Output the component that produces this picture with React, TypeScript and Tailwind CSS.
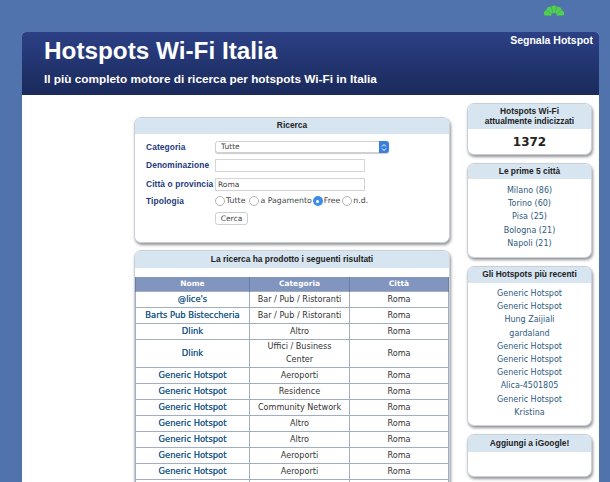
const results: [string, string, string, boolean?][] = [
  ["@lice's", "Bar / Pub / Ristoranti", "Roma"],
  ["Barts Pub Bisteccheria", "Bar / Pub / Ristoranti", "Roma"],
  ["Dlink", "Altro", "Roma"],
  ["Dlink", "Uffici / Business Center", "Roma", true],
  ["Generic Hotspot", "Aeroporti", "Roma"],
  ["Generic Hotspot", "Residence", "Roma"],
  ["Generic Hotspot", "Community Network", "Roma"],
  ["Generic Hotspot", "Altro", "Roma"],
  ["Generic Hotspot", "Altro", "Roma"],
  ["Generic Hotspot", "Aeroporti", "Roma"],
  ["Generic Hotspot", "Aeroporti", "Roma"],
  ["", "", ""],
];

const cities = ["Milano (86)", "Torino (60)", "Pisa (25)", "Bologna (21)", "Napoli (21)"];
const recent = [
  "Generic Hotspot",
  "Generic Hotspot",
  "Hung Zaijiali",
  "gardaland",
  "Generic Hotspot",
  "Generic Hotspot",
  "Generic Hotspot",
  "Alica-4501805",
  "Generic Hotspot",
  "Kristina",
];
const tipologie = [
  { label: "Tutte", checked: false, gap: "mr-[4px]" },
  { label: "a Pagamento", checked: false, gap: "mr-[1px]" },
  { label: "Free", checked: true, gap: "mr-[2px]" },
  { label: "n.d.", checked: false, gap: "" },
];

function Panel({ title, head, children }: { title: React.ReactNode; head: string; children: React.ReactNode }) {
  return (
    <div className="overflow-hidden rounded-[7px] border border-[#c9d0d8] bg-white shadow-[1px_2px_3px_rgba(60,60,70,0.55)]">
      <div className={`flex items-center justify-center bg-[#d7e5f1] text-center font-['Liberation_Sans',sans-serif] text-[8.4px] leading-[9.5px] font-bold text-[#222] ${head}`}>
        {title}
      </div>
      {children}
    </div>
  );
}

function Radio({ checked }: { checked: boolean }) {
  if (checked) {
    return (
      <span className="flex h-[10px] w-[10px] items-center justify-center rounded-full bg-[#3f8ce8]">
        <span className="h-[3px] w-[3px] rounded-full bg-white" />
      </span>
    );
  }
  return <span className="h-[10px] w-[10px] rounded-full border border-[#b4b4b4] bg-white" />;
}

function Label({ children }: { children: React.ReactNode }) {
  return <div className="w-[69px] shrink-0 whitespace-nowrap font-['Liberation_Sans',sans-serif] text-[8.4px] font-bold tracking-[0.1px] text-[#1e3a80]">{children}</div>;
}

function SearchForm() {
  return (
    <div className="h-[108px] pt-[7px] pl-[11px]">
      <div className="flex h-[12px] items-center">
        <Label>Categoria</Label>
        <div className="relative h-[12px] w-[174px]">
          <select className="block h-[12px] w-full appearance-none rounded-[3px] border border-[#d0d0d0] bg-white py-0 pl-[5px] text-[7.5px] leading-[10px] text-[#444] shadow-[0_1px_1px_rgba(0,0,0,0.2)]">
            <option>Tutte</option>
          </select>
          <span className="absolute top-0 right-0 flex h-[12px] w-[10px] items-center justify-center rounded-r-[3px] bg-[#3a7fdc]">
            <svg width="6" height="9" viewBox="0 0 6 9" fill="none" stroke="white" strokeWidth="1">
              <path d="M1 3.500 3 1.500 5 3.500M1 5.500 3 7.500 5 5.500" />
            </svg>
          </span>
        </div>
      </div>
      <div className="mt-[6px] flex h-[13px] items-center">
        <Label>Denominazione</Label>
        <input className="h-[13px] w-[150px] border border-[#d4d4d4] bg-white" />
      </div>
      <div className="mt-[6px] flex h-[13px] items-center">
        <Label>Città o provincia</Label>
        <input defaultValue="Roma" className="h-[13px] w-[150px] border border-[#d4d4d4] bg-white pl-[2px] text-[7.5px] text-[#444]" />
      </div>
      <div className="mt-[3px] flex h-[14px] items-center">
        <Label>Tipologia</Label>
        <div className="flex items-center text-[7.8px] text-[#444]">
          {tipologie.map((t) => (
            <span key={t.label} className={`flex items-center gap-[1px] ${t.gap}`}>
              <Radio checked={t.checked} />
              <span>{t.label}</span>
            </span>
          ))}
        </div>
      </div>
      <button className="mt-[4px] ml-[69px] flex h-[13px] w-[33px] items-center justify-center rounded-[3px] border border-[#cfcfcf] bg-white text-[7.5px] text-[#444]">
        Cerca
      </button>
    </div>
  );
}

function ResultsTable() {
  return (
    <div className="pt-[9px]">
      <table className="w-full table-fixed border-collapse text-center text-[8.1px] text-[#333]">
        <colgroup>
          <col className="w-[114px]" />
          <col className="w-[100px]" />
          <col />
        </colgroup>
        <thead>
          <tr className="h-[14px] bg-[#8195bf] text-[7.5px] text-white">
            <th className="border-x border-[#6d7ea6] font-bold">Nome</th>
            <th className="border-x border-[#6d7ea6] font-bold">Categoria</th>
            <th className="border-x border-[#6d7ea6] font-bold">Città</th>
          </tr>
        </thead>
        <tbody>
          {results.map(([name, cat, city, tall], i) => (
            <tr key={i} className={tall ? "h-[28px]" : "h-[16px]"}>
              <td className="border border-[#a3adc2] py-0 text-[8.4px] whitespace-nowrap text-[#1f5a8a] [text-shadow:0_0_0.5px_#1f5a8a]">{name}</td>
              <td className={`border border-[#a3adc2] leading-[13px] ${tall ? "px-[14px]" : "px-0"}`}>{cat}</td>
              <td className="border border-[#a3adc2]">{city}</td>
            </tr>
          ))}
        </tbody>
      </table>
    </div>
  );
}

function LinkList({ items, className }: { items: string[]; className: string }) {
  return (
    <div className={`text-center text-[8px] leading-[13.2px] text-[#2f5a7e] ${className}`}>
      {items.map((item, i) => (
        <div key={i}>{item}</div>
      ))}
    </div>
  );
}

// five wedges of the green fan above the header
function fanWedge(i: number) {
  const pt = (deg: number, r: number) => {
    const a = (deg * Math.PI) / 180;
    return `${(10 + r * Math.cos(a)).toFixed(2)} ${(11 - r * Math.sin(a)).toFixed(2)}`;
  };
  const from = 176 - i * 35;
  const to = from - 32;
  return `M${pt(from, 3)}L${pt(from, 10)}L${pt((from + to) / 2, 10.8)}L${pt(to, 10)}L${pt(to, 3)}Z`;
}

export default function App() {
  return (
    <div className="relative h-[482px] w-[610px] overflow-hidden bg-[#5072ad] pt-[32px] pl-[22px] font-['DejaVu_Sans',sans-serif]">
      <svg className="absolute top-[5px] left-[544px]" width="20" height="11" viewBox="0 0 20 11" fill="#4fd14a">
        {[0, 1, 2, 3, 4].map((i) => (
          <path key={i} d={fanWedge(i)} />
        ))}
      </svg>

      <div className="w-[577px] overflow-hidden rounded-t-[4px] bg-white">
        <header className="relative h-[63px] bg-gradient-to-b from-[#2c4085] to-[#1a2a5c] pt-[5px] pl-[22px] text-white">
          <h1 className="font-['Liberation_Sans',sans-serif] text-[24.3px] leading-[27px] font-bold">Hotspots Wi-Fi Italia</h1>
          <p className="mt-[8px] font-['Liberation_Sans',sans-serif] text-[11.8px] leading-[14px] font-bold">
            Il più completo motore di ricerca per hotspots Wi-Fi in Italia
          </p>
          <a className="absolute top-[1px] right-[6px] font-['Liberation_Sans',sans-serif] text-[10.5px] font-bold">Segnala Hotspot</a>
        </header>
        <main className="flex h-[400px] bg-white pl-[112px]">
          <div className="w-[316px] shrink-0 pt-[22px]">
            <Panel title="Ricerca" head="h-[16px]">
              <SearchForm />
            </Panel>
            <div className="mt-[7px]">
              <Panel title="La ricerca ha prodotto i seguenti risultati" head="h-[17px]">
                <ResultsTable />
              </Panel>
            </div>
          </div>
          <aside className="ml-[17px] flex w-[125px] shrink-0 flex-col gap-[8px] pt-[8px]">
            <Panel title={<span>Hotspots Wi-Fi<br />attualmente indicizzati</span>} head="h-[25px]">
              <div className="flex h-[25px] items-center justify-center text-[12px] font-bold text-[#222]">1372</div>
            </Panel>
            <Panel title="Le prime 5 città" head="h-[15px]">
              <LinkList items={cities} className="h-[78px] pt-[5px]" />
            </Panel>
            <Panel title="Gli Hotspots più recenti" head="h-[16px]">
              <LinkList items={recent} className="h-[142px] pt-[4px]" />
            </Panel>
            <Panel title="Aggiungi a iGoogle!" head="h-[17px]">
              <div className="h-[24px]" />
            </Panel>
          </aside>
        </main>
      </div>
    </div>
  );
}
